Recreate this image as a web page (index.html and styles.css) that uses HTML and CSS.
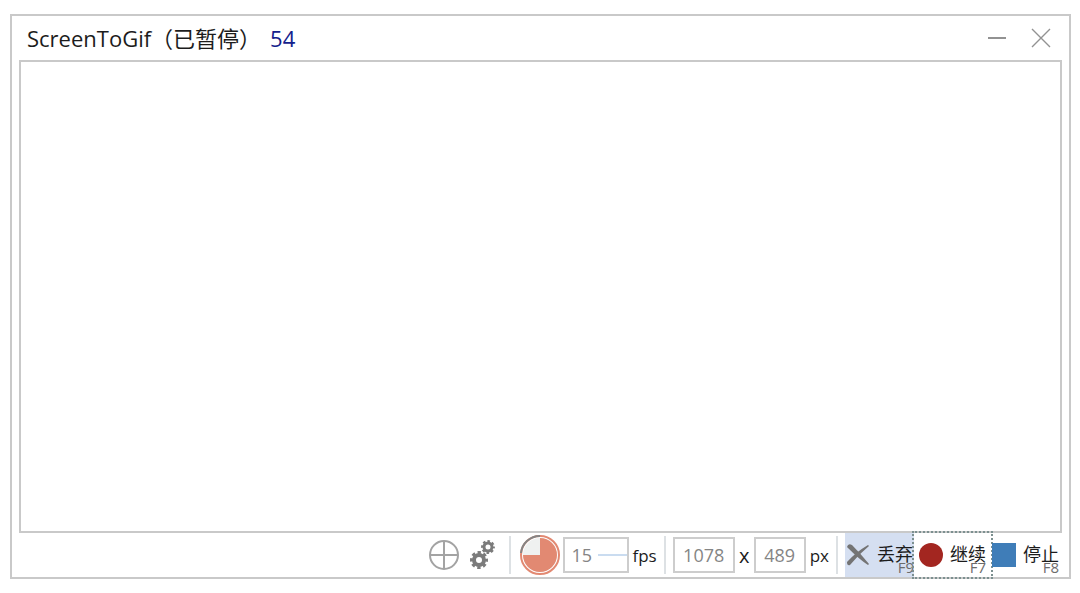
FILE: index.html
```
<!DOCTYPE html>
<html lang="zh-CN">
  <head>
    <meta charset="UTF-8" />
    <meta name="viewport" content="width=device-width, initial-scale=1.0" />
    <title>ScreenToGif</title>
    <link rel="stylesheet" href="styles.css">
  </head>
  <body>
    <div class="window">
      <header class="title-bar">
        <h1>ScreenToGif（已暂停）</h1>
        <span class="frame-count">54</span>
        <div class="window-buttons">
          <button type="button" aria-label="最小化">
            <svg width="20" height="20" viewBox="0 0 20 20"><path d="M1 10H19" /></svg>
          </button>
          <button type="button" aria-label="关闭">
            <svg width="20" height="20" viewBox="0 0 20 20"><path d="M1 1L19 19M19 1L1 19" /></svg>
          </button>
        </div>
      </header>

      <main class="capture-area"></main>

      <footer class="toolbar">
        <button type="button" class="icon-button" aria-label="对齐">
          <svg width="30" height="30" viewBox="0 0 30 30" fill="none" stroke="#a3a3a3" stroke-width="2">
            <circle cx="15" cy="15" r="14" />
            <path d="M15 1V29M1 15H29" />
          </svg>
        </button>
        <button type="button" class="icon-button gears" aria-label="选项">
          <svg width="26" height="30" viewBox="0 0 26 30" fill="none" stroke="#7b7b7b">
            <circle cx="9" cy="20" r="5" stroke-width="4" />
            <circle cx="9" cy="20" r="7.5" stroke-width="3" stroke-dasharray="3.3 2.59" stroke-dashoffset="1.65" />
            <circle cx="18" cy="7" r="4" stroke-width="3" />
            <circle cx="18" cy="7" r="5.7" stroke-width="2.4" stroke-dasharray="2.5 1.977" stroke-dashoffset="1.25" />
          </svg>
        </button>

        <span class="separator"></span>

        <svg class="pie" width="40" height="40" viewBox="0 0 40 40">
          <circle cx="20" cy="20" r="17" fill="#eff1f0" />
          <path d="M20 20V3A17 17 0 1 1 3 20Z" fill="#e28972" />
          <circle cx="20" cy="20" r="19" fill="none" stroke="#e28972" stroke-width="2" />
          <path d="M1 18A19 19 0 0 1 20 1" fill="none" stroke="#858585" stroke-width="2" />
        </svg>
        <div class="fps-box">
          <input type="text" id="fps" value="15" />
          <span class="fps-line"></span>
        </div>
        <label for="fps">fps</label>

        <span class="separator"></span>

        <input type="text" id="width" class="size-box wide" value="1078" aria-label="宽度" />
        <label class="times" for="height">x</label>
        <input type="text" id="height" class="size-box" value="489" aria-label="高度" />
        <span class="unit">px</span>

        <span class="separator"></span>

        <div class="actions">
          <button type="button" class="action discard">
            <svg width="24" height="24" viewBox="0 0 24 24" fill="#747474">
              <path d="M1 4Q2 0 6 2Q14 10 23 21L22 22Q14 17 2 5Z" />
              <path d="M23 3Q12 12 4 22Q1 23 1 19Q10 9 22 2Z" />
            </svg>
            <span class="action-text">丢弃</span>
            <span class="key">F9</span>
          </button>
          <button type="button" class="action resume">
            <svg width="24" height="24" viewBox="0 0 24 24"><circle cx="12" cy="12" r="12" fill="#a32620" /></svg>
            <span class="action-text">继续</span>
            <span class="key">F7</span>
          </button>
          <button type="button" class="action stop">
            <svg width="24" height="24" viewBox="0 0 24 24"><path d="M0 0H24V24H0Z" fill="#3f7db8" /></svg>
            <span class="action-text">停止</span>
            <span class="key">F8</span>
          </button>
        </div>
      </footer>
    </div>
  </body>
</html>
```
FILE: styles.css
```
* {
  box-sizing: border-box;
}

body {
  margin: 0;
  padding: 14px 9px 14px 10px;
  height: 100vh;
  display: flex;
  background-color: #fff;
  color: #1c1c1c;
  font-family: "Open Sans", "Noto Sans CJK SC", sans-serif;
}

button,
input {
  font-family: inherit;
  margin: 0;
}

button {
  padding: 0;
  border: none;
  background: none;
  cursor: pointer;
}

svg {
  display: block;
  flex: none;
}

.window {
  flex: 1;
  display: flex;
  flex-direction: column;
  border: 2px solid #c9c9c9;
}

.title-bar {
  display: flex;
  align-items: center;
  height: 44px;
  padding: 0 18px 0 15px;
  line-height: 30px;
}

h1 {
  margin: 0;
  font-size: 22px;
  font-weight: 400;
}

.frame-count {
  margin-left: 9px;
  font-size: 22px;
  color: #14218c;
}

.window-buttons {
  display: flex;
  gap: 24px;
  margin-left: auto;
}

.window-buttons svg {
  fill: none;
  stroke: #929292;
  stroke-width: 2;
}

.window-buttons button:last-child svg {
  stroke-width: 1.4;
}

.capture-area {
  flex: 1;
  margin: 0 7px;
  border: 2px solid #c9c9c9;
}

.toolbar {
  display: flex;
  align-items: center;
  justify-content: flex-end;
  height: 44px;
  padding-right: 10px;
  font-size: 17px;
}

.gears {
  margin-left: 11px;
}

.separator {
  width: 2px;
  height: 38px;
  margin: 0 7px;
  background-color: #dde1e4;
}

.gears + .separator {
  margin: 0 9px 0 13px;
}

.fps-box {
  display: flex;
  align-items: center;
  width: 66px;
  height: 36px;
  margin: 0 3px;
  border: 2px solid #cdcdcd;
}

.fps-box input {
  width: 33px;
  padding: 0 0 0 6px;
  border: none;
  outline: none;
  background: none;
  color: #858585;
  font-size: 18px;
}

.fps-line {
  flex: 1;
  height: 2px;
  background-color: #cadcf0;
}

.size-box {
  width: 52px;
  height: 36px;
  padding: 0;
  border: 2px solid #cdcdcd;
  outline: none;
  color: #858585;
  font-size: 18px;
  text-align: center;
}

.size-box.wide {
  width: 62px;
}

.times {
  width: 19px;
  font-size: 20px;
  text-align: center;
}

.unit {
  margin-left: 4px;
}

.actions {
  display: flex;
  align-self: stretch;
}

.action {
  position: relative;
  display: flex;
  align-items: center;
  gap: 7px;
  color: #1c1c1c;
  font-size: 18px;
}

.discard {
  padding: 0 1px;
  background-color: #d5dff1;
}

.resume {
  padding: 0 5px;
  outline: 2px dotted #7c9090;
}

.stop {
  margin-left: 1px;
}

.action-text {
  padding-bottom: 4px;
}

/* shortcut hint over the corner of the caption */
.key {
  position: absolute;
  right: 0;
  bottom: 1px;
  color: #6c6c6c;
  font-size: 15px;
  line-height: 18px;
}

.resume .key {
  right: 5px;
}
```
